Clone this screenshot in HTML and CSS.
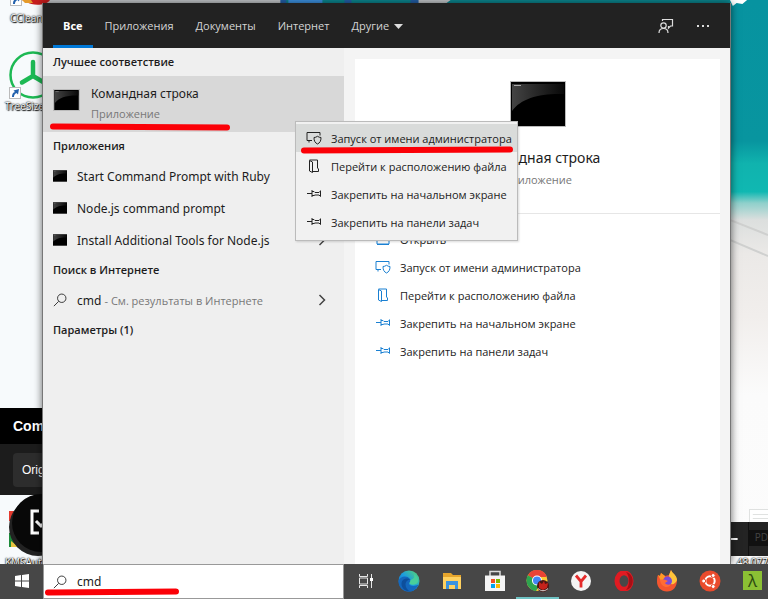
FILE: index.html
```html
<!DOCTYPE html>
<html lang="ru">
<head>
  <meta charset="UTF-8" />
  <meta name="viewport" content="width=device-width, initial-scale=1" />
  <title>Поиск Windows - cmd</title>
  <link rel="stylesheet" href="styles.css">
</head>
<body>

<svg class="symbols" aria-hidden="true">
  <symbol id="i-admin" viewBox="0 0 16 14">
    <path d="M6 9.500H1v-8h13v3M3 9.500v2M8 6.500c1.300 0 2.200-.4 3.500-1.200 1.200.8 2.200 1.200 3.500 1.200 0 3.500-1 5.300-3.500 6.500C9 11.800 8 10 8 6.500z"/>
  </symbol>
  <symbol id="i-folder" viewBox="0 0 16 14">
    <path d="M3.500 1.500l3 1.500v10.500l-3-1.500zM3.500 1h8v8l1 1v2.500h-6"/>
  </symbol>
  <symbol id="i-pin" viewBox="0 0 16 14">
    <path d="M1 6.500h5M6 3v7M6 4.500h2l1 1h4l1.500-1.500M6 8.500h2l1-.5h4l1.500 1.500M14.500 3.500v6"/>
  </symbol>
  <symbol id="i-open" viewBox="0 0 16 14">
    <path d="M2 2h12v10H2zM2 4h12M2 12.500h12"/>
  </symbol>
  <symbol id="i-search" viewBox="0 0 16 16">
    <circle cx="10" cy="6" r="4.800"/><path d="M6.500 9.500L1 15"/>
  </symbol>
  <symbol id="i-console" viewBox="0 0 54 44">
    <rect width="54" height="44" fill="#000"/>
    <path d="M1 2h52v10C30 11 10 16 1 29z" fill="url(#shine)"/>
    <path d="M3 3.500h7" stroke="#aaa" stroke-width="1"/>
  </symbol>
  <symbol id="i-link" viewBox="0 0 12 12">
    <rect x=".5" y=".5" width="11" height="11" fill="#fff" stroke="#bbb"/>
    <path d="M3 10c0-3 1-4.500 3-5L4.500 3.500 10 2 9 7.500 7.500 6C5.500 7 5 8 5 10z" fill="#2462ad"/>
  </symbol>
  <defs>
    <linearGradient id="shine" x1="0" y1="0" x2="1" y2="0"><stop offset="0" stop-color="#444"/><stop offset="1" stop-color="#080808"/></linearGradient>
    <linearGradient id="edge" x1="0" y1="1" x2="1" y2="0"><stop offset="0" stop-color="#1464b8"/><stop offset=".5" stop-color="#1b9be0"/><stop offset="1" stop-color="#5bdb6a"/></linearGradient>
    <linearGradient id="beach" x1="0" y1="0" x2="0" y2="1">
      <stop offset="0" stop-color="#0793a0"/><stop offset=".25" stop-color="#08959f"/><stop offset=".29" stop-color="#10b3ae"/><stop offset=".34" stop-color="#10b8b2"/>
      <stop offset=".36" stop-color="#8fd0cb"/><stop offset=".39" stop-color="#dcdfde"/><stop offset=".45" stop-color="#ebe9e7"/><stop offset=".56" stop-color="#f1eeec"/><stop offset=".7" stop-color="#fbfbfb"/><stop offset="1" stop-color="#fcfcfc"/>
    </linearGradient>
  </defs>
</svg>

<main class="desktop">

  <!-- wallpaper: sea and sand -->
  <svg class="wallpaper wallpaper-top" viewBox="0 0 688 6" preserveAspectRatio="none" aria-hidden="true">
    <path fill="#0b8a93" d="M0 0h688v6H0z"/>
    <path fill="#c9cdd0" d="M0 0h240v6H0zM370 0h38l-8 6h-28z"/>
    <path fill="#3e96e8" d="M246 0h34v6h-34z"/>
    <path fill="#2462ad" d="M238 0h6v6h-6zM302 0h7v6h-7zM368 0h8v6h-8z"/>
  </svg>
  <svg class="wallpaper wallpaper-side" viewBox="0 0 40 564" preserveAspectRatio="none" aria-hidden="true">
    <path fill="url(#beach)" d="M0 0h40v564H0z"/>
    <path fill="none" stroke="#cfd0cf" stroke-width="2" d="M0 220l40 15M0 240l40 16"/>
    <path fill="#fff" d="M0 0h18l-5 4-6-1-4 3z"/>
    <path fill="#dfe1e0" d="M20 509h20v13H20z"/>
    <path fill="#fff" d="M21 510h19v12H21z"/>
    <path fill="none" stroke="#dfe1e0" d="M24 514.500h16M24 518.500h16"/>
    <path fill="#242424" d="M0 522h40v34H0z"/>
    <path fill="#111" d="M19 522h1v34h-1zM20 530h20v16H20z"/>
    <path fill="#fff" d="M0 538h8v2H0z"/>
  </svg>
  <span class="pd">PD</span>
  <span class="shortcut-name name-right">48.077</span>

  <div class="shortcut shortcut-cc">
    <svg width="40" height="12" viewBox="0 0 40 12" aria-hidden="true">
      <path d="M12 0h28c-4 6-18 6-23 2z" fill="#c81d1d"/><path d="M12 0h9l2 3h-8z" fill="#e59a2a"/>
      <use href="#i-link" y="-6" width="12" height="12"/>
    </svg>
    <span class="shortcut-name">CCleaner</span>
  </div>
  <div class="shortcut shortcut-tree">
    <svg width="52" height="50" viewBox="0 0 52 50" aria-hidden="true">
      <g fill="none" stroke="#1db954"><circle cx="24" cy="25" r="22.500" stroke-width="2.500"/>
      <path d="M24 12v14L13 32.500M24 26l11 6.500" stroke-width="4.500" stroke-linecap="round"/></g>
      <use href="#i-link" y="37" width="12" height="12"/>
    </svg>
    <span class="shortcut-name">TreeSize</span>
  </div>
  <div class="recorder">
    <strong class="recorder-title">Command</strong>
    <div class="recorder-body"><span class="recorder-tab">Original</span></div>
  </div>
  <svg class="badge" width="48" height="72" viewBox="0 0 48 72" aria-hidden="true">
    <path d="M3 26h8v7H3zM1 20h6v10H1z" fill="#e33a2f"/><path d="M1 42h14v14H1z" fill="#1c8a3a"/><path d="M3 50l8 6H3z" fill="#e8c341"/>
    <circle cx="30" cy="36" r="29" fill="#222"/><circle cx="33" cy="32" r="29" fill="#080808"/>
    <path d="M31 20h-7v22h7M28 30l5 5 7-7" fill="none" stroke="#fff" stroke-width="3"/>
  </svg>
  <span class="shortcut-name name-left">KMSAuto</span>

  <section class="panel">
    <nav class="tabs">
      <button class="tab active">Все</button>
      <button class="tab">Приложения</button>
      <button class="tab">Документы</button>
      <button class="tab">Интернет</button>
      <button class="tab">Другие <svg width="9" height="5" viewBox="0 0 9 5" aria-hidden="true"><path d="M0 0h9L4.500 5z" fill="#ddd"/></svg></button>
      <span class="spacer"></span>
      <button class="tool" aria-label="Отзыв">
        <svg width="16" height="16" viewBox="0 0 16 16" aria-hidden="true"><g fill="none" stroke="#ddd" stroke-width="1.200"><circle cx="5.500" cy="7.500" r="2.700"/><path d="M1 15c0-3 2-4.500 4.500-4.500S10 12 10 15M4.500 3V1.500h10V8h-2l-2 2V8"/></g></svg>
      </button>
      <button class="tool" aria-label="Параметры">
        <svg width="14" height="4" viewBox="0 0 14 4" aria-hidden="true"><path d="M1 1h2v2H1zM6 1h2v2H6zM11 1h2v2h-2z" fill="#ddd"/></svg>
      </button>
    </nav>

    <div class="content">
      <div class="results">
        <h2 class="group">Лучшее соответствие</h2>
        <button class="best">
          <svg class="console" width="27" height="22" aria-hidden="true"><use href="#i-console"/></svg>
          <span class="best-text">
            <span class="best-name">Командная строка</span>
            <span class="kind">Приложение</span>
          </span>
          <svg class="mark mark-best" width="182" height="8" viewBox="0 0 182 8" aria-hidden="true"><path d="M4 3.500L178 4.500"/></svg>
        </button>

        <h2 class="group">Приложения</h2>
        <button class="row"><svg width="14" height="12" aria-hidden="true"><use href="#i-console"/></svg>Start Command Prompt with Ruby</button>
        <button class="row"><svg width="14" height="12" aria-hidden="true"><use href="#i-console"/></svg>Node.js command prompt</button>
        <button class="row"><svg width="14" height="12" aria-hidden="true"><use href="#i-console"/></svg>Install Additional Tools for Node.js
          <svg class="chevron" width="8" height="12" viewBox="0 0 8 12" aria-hidden="true"><path d="M1.500 1L6.500 6l-5 5"/></svg></button>

        <h2 class="group">Поиск в Интернете</h2>
        <button class="row"><svg class="line" width="14" height="14" aria-hidden="true"><use href="#i-search"/></svg><span>cmd <span class="hint">- См. результаты в Интернете</span></span>
          <svg class="chevron" width="8" height="12" viewBox="0 0 8 12" aria-hidden="true"><path d="M1.500 1L6.500 6l-5 5"/></svg></button>

        <h2 class="group">Параметры (1)</h2>
      </div>

      <div class="preview">
        <div class="card">
          <div class="hero">
            <svg class="console" width="56" height="46" aria-hidden="true"><use href="#i-console"/></svg>
            <h1 class="app-name">Командная строка</h1>
            <span class="kind">Приложение</span>
          </div>
          <div class="actions">
            <button class="action"><svg class="line" width="16" height="14" aria-hidden="true"><use href="#i-open"/></svg>Открыть</button>
            <button class="action"><svg class="line" width="16" height="14" aria-hidden="true"><use href="#i-admin"/></svg>Запуск от имени администратора</button>
            <button class="action"><svg class="line" width="16" height="14" aria-hidden="true"><use href="#i-folder"/></svg>Перейти к расположению файла</button>
            <button class="action"><svg class="line" width="16" height="14" aria-hidden="true"><use href="#i-pin"/></svg>Закрепить на начальном экране</button>
            <button class="action"><svg class="line" width="16" height="14" aria-hidden="true"><use href="#i-pin"/></svg>Закрепить на панели задач</button>
          </div>
        </div>
      </div>
    </div>
  </section>

  <div class="menu" role="menu">
    <button class="menu-item selected" role="menuitem"><svg class="line" width="16" height="14" aria-hidden="true"><use href="#i-admin"/></svg>Запуск от имени администратора</button>
    <button class="menu-item" role="menuitem"><svg class="line" width="16" height="14" aria-hidden="true"><use href="#i-folder"/></svg>Перейти к расположению файла</button>
    <button class="menu-item" role="menuitem"><svg class="line" width="16" height="14" aria-hidden="true"><use href="#i-pin"/></svg>Закрепить на начальном экране</button>
    <button class="menu-item" role="menuitem"><svg class="line" width="16" height="14" aria-hidden="true"><use href="#i-pin"/></svg>Закрепить на панели задач</button>
    <svg class="mark mark-menu" width="214" height="8" viewBox="0 0 214 8" aria-hidden="true"><path d="M4 4.500L210 3.500"/></svg>
  </div>
</main>

<footer class="taskbar">
  <button class="task" aria-label="Пуск">
    <svg width="14" height="14" viewBox="0 0 14 14" aria-hidden="true"><path d="M0 2l6-1v5.500H0zM7 .9L14 0v6.500H7zM0 7.500h6V13l-6-1zM7 7.500h7V14l-7-.9z" fill="#fff"/></svg>
  </button>
  <label class="search">
    <svg class="line" width="14" height="14" aria-hidden="true"><use href="#i-search"/></svg>
    <input class="search-input" type="text" value="cmd" aria-label="Поиск" />
    <svg class="mark mark-search" width="136" height="8" viewBox="0 0 136 8" aria-hidden="true"><path d="M4 4.500L132 3.500"/></svg>
  </label>
  <button class="task" aria-label="Представление задач">
    <svg width="16" height="16" viewBox="0 0 16 16" aria-hidden="true"><path d="M1.500 1v2.500h8V1M1.500 15v-2.500h8V15M1.500 5h8v6h-8zM13.500 1v14" fill="none" stroke="#e6e6e6"/><path d="M12 5h3v3h-3z" fill="#fff"/></svg>
  </button>
  <button class="task" aria-label="Edge">
    <svg width="22" height="22" viewBox="0 0 22 22" aria-hidden="true"><circle cx="11" cy="11" r="10.500" fill="url(#edge)"/><path d="M.5 11C2 6 9 5 12 9c1.500 2.500-1 4-1 5 2 3 7 2 9.500.5C18 20 14 22 10 21.500 4 21 .5 17 .5 11z" fill="#1467bd"/><path d="M12.500 9.500c-2.500 0-5 2-5 5s2 6 5 7c-5 0-9-3-9-7.500s4.500-7 9-4.500z" fill="#0d4f9c"/><path d="M12.500 10c0 2-1.500 2.500-1 3.500 1.500 2 6 1.500 8-.5 2-4-1-8-4-9 2 3 0 5-3 6z" fill="#48ce9a"/></svg>
  </button>
  <button class="task" aria-label="Проводник">
    <svg width="20" height="18" viewBox="0 0 20 18" aria-hidden="true"><path d="M1 1h8l2 2h8v14H1z" fill="#e6a52c"/><path d="M1 5h18v12H1z" fill="#ffd160"/><path d="M4 9h12v8h-3v-4H7v4H4z" fill="#3b93df"/></svg>
  </button>
  <button class="task" aria-label="Магазин">
    <svg width="22" height="22" viewBox="0 0 22 22" aria-hidden="true"><path d="M6 6V1.500h10V6" fill="none" stroke="#ddd" stroke-width="1.500"/><path d="M1 5.500h20V21H1z" fill="#f5f5f5"/><path d="M7 9h4v4H7z" fill="#f25022"/><path d="M12 9h4v4h-4z" fill="#7fba00"/><path d="M7 14h4v4H7z" fill="#00a4ef"/><path d="M12 14h4v4h-4z" fill="#ffb900"/></svg>
  </button>
  <button class="task running" aria-label="Chrome">
    <svg width="24" height="22" viewBox="0 0 24 22" aria-hidden="true"><circle cx="11" cy="10.500" r="10.500" fill="#fcc934"/><path d="M11 10.500L1.900 5.200A10.500 10.500 0 0 1 20.100 5.200L20.500 7H11z" fill="#e94335"/><path d="M1.900 5.200A10.500 10.500 0 0 0 10 21l4-7-3-3.500z" fill="#2da44f"/><circle cx="11" cy="10.500" r="5" fill="#fff"/><circle cx="11" cy="10.500" r="4" fill="#4285f4"/><circle cx="17" cy="16" r="6" fill="#4a1714"/><path d="M13 12l3 2 2-3 1 3 3-1-1 5-4 2-4-2z" fill="#c5231c"/><path d="M12 18.500c3 3 7 3 10 0" fill="none" stroke="#ddd"/></svg>
  </button>
  <button class="task" aria-label="Яндекс">
    <svg width="20" height="20" viewBox="0 0 20 20" aria-hidden="true"><circle cx="10" cy="10" r="10" fill="#f4f4f4"/><path d="M5 4.500l5 6 5-6M10 10v6.500" fill="none" stroke="#e52a2a" stroke-width="2.800"/></svg>
  </button>
  <button class="task" aria-label="Opera">
    <svg width="20" height="20" viewBox="0 0 20 20" aria-hidden="true"><ellipse cx="10" cy="10" rx="7" ry="8.200" fill="none" stroke="#e01b22" stroke-width="5"/><path d="M12 1c9 2 9 16 0 18 4-4 4-14 0-18z" fill="#a70e15"/></svg>
  </button>
  <button class="task" aria-label="Firefox">
    <svg width="22" height="22" viewBox="0 0 22 22" aria-hidden="true"><path d="M2 5l2 1 1-3 4 3 4-1 2-5c1 3 5 5 6 10 0 7-4 11.500-10 11.500S1 17 1 12C1 9 1 7 2 5z" fill="#f4562f"/><path d="M13 5l2-5c1 3 6 5 6 10-1 3-4 5-6 4-1-4-2-5-2-9z" fill="#ffc43a"/><path d="M2 5l2 1 1-3 4 3v3L5 11z" fill="#ff9a26"/><circle cx="11.500" cy="11" r="4.500" fill="#7b4bd8"/><path d="M4 10c3-1 6 0 8 1l-3 2c1 2 4 2 6 1-2 5-10 4-11-4z" fill="#ff6c35"/></svg>
  </button>
  <button class="task" aria-label="Ubuntu">
    <svg width="22" height="22" viewBox="0 0 22 22" aria-hidden="true"><circle cx="11" cy="11" r="10.500" fill="#ea4b2c"/><circle cx="11" cy="11" r="4.700" fill="none" stroke="#fff" stroke-width="2"/><g fill="#fff" stroke="#ea4b2c"><circle cx="4.700" cy="11" r="2"/><circle cx="14.200" cy="5.500" r="2"/><circle cx="14.200" cy="16.500" r="2"/></g></svg>
  </button>
  <button class="task" aria-label="Cmder"><span class="lambda">λ</span></button>
</footer>

</body>
</html>
```
FILE: styles.css
```css
* {
  box-sizing: border-box;
}
body {
  margin: 0;
  height: 100vh;
  display: flex;
  flex-direction: column;
  overflow: hidden;
  font-family: "Open Sans", "Noto Sans", sans-serif;
  font-size: 11px;
  color: #1c1c1c;
}
button {
  font: inherit;
  color: inherit;
  background: none;
  border: none;
  padding: 0;
  text-align: left;
  white-space: nowrap;
  cursor: pointer;
}
svg {
  flex: none;
}
.symbols {
  position: absolute;
  width: 0;
  height: 0;
}
.line {
  fill: none;
  stroke: #222;
  stroke-width: 1;
}

/* desktop */
.desktop {
  position: relative;
  flex: 1;
  min-height: 0;
  display: flex;
  padding: 3px 37px 0 42px;
  background: #f7fafc;
  overflow: hidden;
}
.wallpaper {
  position: absolute;
  top: 0;
  right: 37px;
}
.wallpaper-top {
  left: 42px;
  width: calc(100% - 79px);
  height: 6px;
}
.wallpaper-side {
  right: 0;
  width: 38px;
  height: 100%;
}
.shortcut,
.recorder,
.badge,
.pd,
.name-left,
.name-right {
  position: absolute;
}
.shortcut {
  display: flex;
  flex-direction: column;
}
.shortcut-cc {
  left: 10px;
  top: 0;
}
.shortcut-tree {
  left: 9px;
  top: 50px;
}
.shortcut-name {
  font-size: 10px;
  line-height: 12px;
  color: #fff;
  text-shadow: 0 0 2px #000, 0 0 1px #000, 1px 1px 1px #000;
}
.shortcut-tree .shortcut-name {
  margin-left: -4px;
}
.name-left {
  left: 5px;
  bottom: -4px;
}
.name-right {
  right: 0;
  bottom: -4px;
}
.pd {
  right: 0;
  bottom: 20px;
  font-size: 10px;
  line-height: 14px;
  color: #444;
}
.recorder {
  left: 0;
  top: 408px;
  width: 60px;
  background: #000;
  color: #fff;
  font-family: "Liberation Sans", Arial, sans-serif;
  font-size: 12px;
}
.recorder-title {
  display: block;
  padding-left: 13px;
  font-size: 14px;
  line-height: 36px;
}
.recorder-body {
  padding: 9px 0 8px 13px;
  background: #1c1c1c;
}
.recorder-tab {
  display: block;
  padding-left: 9px;
  border-radius: 4px;
  background: #2d2d2d;
  line-height: 34px;
}
.badge {
  left: 8px;
  bottom: 1px;
}

/* search window */
.panel {
  position: relative;
  flex: 1;
  display: flex;
  flex-direction: column;
  border-left: 1px solid #777;
  border-right: 1px solid #777;
  background: #f4f4f4;
  box-shadow: 0 0 8px rgba(0, 0, 0, 0.6);
}
.tabs {
  display: flex;
  height: 45px;
  padding: 0 20px 0 10px;
  background: #222;
  color: #d4d4d4;
}
.tab {
  margin-right: 2px;
  padding: 0 10px;
  border-bottom: 3px solid transparent;
  border-top: 2px solid transparent;
}
.tab.active {
  color: #fff;
  font-weight: 700;
  border-bottom-color: #0078d7;
}
.tab svg {
  margin-left: 2px;
  vertical-align: middle;
}
.spacer {
  flex: 1;
}
.tool {
  display: flex;
  align-items: center;
  margin-left: 22px;
}
.content {
  flex: 1;
  display: flex;
  min-height: 0;
}
.results {
  width: 301px;
  background: #efefef;
}
.group {
  margin: 0;
  padding-left: 10px;
  font-size: 11px;
  font-weight: 600;
  line-height: 28px;
}
.best {
  position: relative;
  display: flex;
  align-items: center;
  gap: 11px;
  width: 100%;
  height: 56px;
  padding-left: 10px;
  background: #d8d8d8;
}
.console {
  border: 1px solid #bbb;
}
.best .console {
  margin-bottom: 8px;
}
.best-text {
  display: flex;
  flex-direction: column;
  line-height: 20px;
}
.best-name,
.row,
.search-input {
  font-family: "Noto Sans", sans-serif;
  font-size: 12px;
}
.kind {
  line-height: 20px;
  color: #777;
}
.row {
  display: flex;
  align-items: center;
  gap: 10px;
  width: 100%;
  height: 32px;
  padding: 0 18px 0 10px;
}
.hint {
  font-family: "Open Sans", sans-serif;
  font-size: 11px;
  color: #777;
}
.chevron {
  margin-left: auto;
  fill: none;
  stroke: #444;
  stroke-width: 1.5;
}

/* preview */
.preview {
  flex: 1;
  display: flex;
  padding: 11px 10px 0 11px;
}
.card {
  flex: 1;
  background: #fff;
}
.hero {
  display: flex;
  flex-direction: column;
  align-items: center;
  height: 155px;
  padding-top: 22px;
  border-bottom: 1px solid #e6e6e6;
}
.app-name {
  margin: 19px 0 0;
  font-family: "Noto Sans", sans-serif;
  font-size: 14px;
  font-weight: 400;
  line-height: 24px;
}
.actions {
  padding: 11px 0 0 20px;
}
.action {
  display: flex;
  align-items: center;
  gap: 9px;
  width: 100%;
  height: 28px;
}
.action .line {
  stroke: #1a80d2;
}

/* context menu */
.menu {
  position: absolute;
  left: 295px;
  top: 121px;
  padding: 2px 0 4px;
  border: 1px solid #bbb;
  background: #f1f1f1;
  box-shadow: 1px 1px 2px rgba(0, 0, 0, 0.15);
}
.menu-item {
  display: flex;
  align-items: center;
  gap: 9px;
  width: 221px;
  height: 28px;
  padding-left: 10px;
}
.menu-item.selected {
  background: #d9dbda;
}

/* red marker lines */
.mark {
  position: absolute;
  fill: none;
  stroke: #fb0007;
  stroke-width: 6;
  stroke-linecap: round;
}
.mark-best {
  left: 6px;
  bottom: 1px;
}
.mark-menu {
  left: 4px;
  top: 24px;
}
.mark-search {
  left: 0;
  bottom: 2px;
}

/* taskbar */
.taskbar {
  display: flex;
  height: 35px;
  background: #474747;
  overflow: hidden;
}
.task {
  flex: none;
  display: flex;
  align-items: center;
  justify-content: center;
  width: 43px;
  border-bottom: 2px solid transparent;
}
.task.running {
  border-bottom-color: #6fc3c4;
}
.search {
  position: relative;
  flex: none;
  display: flex;
  align-items: center;
  gap: 10px;
  width: 301px;
  padding-left: 9px;
  border: 1px solid #999;
  background: #fff;
}
.search-input {
  flex: 1;
  min-width: 0;
  padding: 0;
  border: none;
  outline: none;
  color: #222;
}
.lambda {
  width: 19px;
  background: #8bc034;
  color: #2d4a12;
  font-size: 17px;
  line-height: 19px;
  text-align: center;
}
```
